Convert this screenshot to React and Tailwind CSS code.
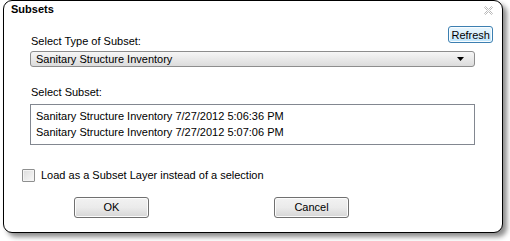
import React from "react";

function Btn({ children, className = "" }) {
  return (
    <button
      className={
        "h-[21px] rounded-[3px] border border-[#707070] bg-gradient-to-b from-[#f2f2f2] via-[#ebebeb] to-[#d6d6d6] text-[11px] text-black shadow-[inset_0_0_0_1px_#fcfcfc] " +
        className
      }
    >
      {children}
    </button>
  );
}

export default function App() {
  return (
    <div className="w-[510px] h-[241px] bg-white pl-[3px] font-['Liberation_Sans',Arial,sans-serif] text-[11px] text-black">
      <div className="relative w-[500px] h-[233px] border border-black rounded-[9px] bg-white shadow-[4px_4px_5px_rgba(0,0,0,0.45)]">
        <div className="pl-[7px] pt-[2px] font-bold text-[11px] leading-[13px]">Subsets</div>
        <div className="absolute right-[9px] top-[5px]">
          <svg width="9" height="9" viewBox="0 0 9 9">
            <path d="M0.5 1.5 L1.5 0.5 L4.5 3.5 L7.5 0.5 L8.5 1.5 L5.5 4.5 L8.5 7.5 L7.5 8.5 L4.5 5.5 L1.5 8.5 L0.5 7.5 L3.5 4.5 Z" fill="none" stroke="#b8b8b8" strokeWidth="1" />
          </svg>
        </div>

        <div className="pl-[26px] pr-[27px]">
          <div className="flex items-end justify-between mt-[10px]">
            <span className="pl-[1px] mb-[-5px] leading-[14px]">Select Type of Subset:</span>
            <button className="h-[17px] px-[2px] mr-[-18px] rounded-[3px] border border-[#3c7fb1] bg-gradient-to-b from-[#eaf6fd] via-[#d9f0fc] to-[#bee6fd] text-[11px] leading-[14px] shadow-[inset_0_0_0_1px_#fafdff]">
              Refresh
            </button>
          </div>
          <div className="mt-[8px] h-[16px] flex items-center justify-between rounded-[3px] border border-[#8d8d8d] bg-gradient-to-b from-[#f6f6f6] to-[#dcdcdc] pl-[5px] pr-[9px]">
            <span className="leading-[14px]">Sanitary Structure Inventory</span>
            <svg width="8" height="4" viewBox="0 0 8 4">
              <path d="M0 0 H7 L3.5 4 Z" fill="#000" />
            </svg>
          </div>

          <div className="mt-[18px] pl-[1px] leading-[14px]">Select Subset:</div>
          <div className="mt-[5px] h-[41px] border border-[#828790] pt-[3px] pl-[5px] leading-[16px]">
            <div>Sanitary Structure Inventory 7/27/2012 5:06:36 PM</div>
            <div>Sanitary Structure Inventory 7/27/2012 5:07:06 PM</div>
          </div>
        </div>

        <div className="flex items-center mt-[23px] pl-[18px]">
          <div className="w-[13px] h-[13px] border border-[#8e8f8f] rounded-[1px] bg-gradient-to-br from-[#dcdcdc] to-[#f9f9f9] shadow-[inset_0_0_0_1px_#f4f4f4]" />
          <span className="ml-[6px] leading-[14px]">Load as a Subset Layer instead of a selection</span>
        </div>

        <div className="flex mt-[15px] pl-[70px]">
          <Btn className="w-[75px]">OK</Btn>
          <Btn className="w-[75px] ml-[125px]">Cancel</Btn>
        </div>
      </div>
    </div>
  );
}
